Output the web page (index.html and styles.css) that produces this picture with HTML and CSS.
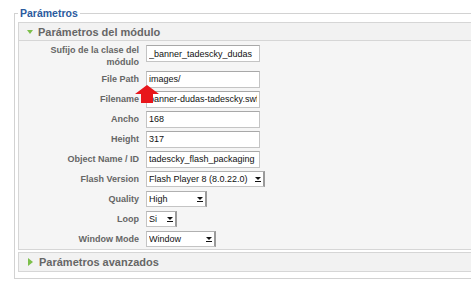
FILE: index.html
```html
<!DOCTYPE html>
<html lang="es">
<head>
  <meta charset="UTF-8" />
  <title>Parámetros</title>
  <link rel="stylesheet" href="styles.css">
</head>
<body>

  <fieldset class="params">
    <legend>Parámetros</legend>

    <div class="pane">
      <div class="pane-title open"><span class="toggle"></span>Parámetros del módulo</div>
      <div class="pane-body">
        <div class="row first">
          <label for="suffix">Sufijo de la clase del módulo</label>
          <input type="text" id="suffix" value="_banner_tadescky_dudas">
        </div>
        <div class="row">
          <label for="path">File Path</label>
          <input type="text" id="path" value="images/">
        </div>
        <div class="row">
          <label for="filename">Filename</label>
          <input type="text" id="filename" value="banner-dudas-tadescky.swf">
        </div>
        <div class="row">
          <label for="width">Ancho</label>
          <input type="text" id="width" value="168">
        </div>
        <div class="row">
          <label for="height">Height</label>
          <input type="text" id="height" value="317">
        </div>
        <div class="row">
          <label for="objname">Object Name / ID</label>
          <input type="text" id="objname" value="tadescky_flash_packaging">
        </div>
        <div class="row">
          <label for="version">Flash Version</label>
          <span class="dropdown w-version">
            <select id="version"><option>Flash Player 8 (8.0.22.0)</option></select>
            <span class="caret"></span>
          </span>
        </div>
        <div class="row">
          <label for="quality">Quality</label>
          <span class="dropdown w-quality">
            <select id="quality"><option>High</option></select>
            <span class="caret"></span>
          </span>
        </div>
        <div class="row">
          <label for="loop">Loop</label>
          <span class="dropdown w-loop">
            <select id="loop"><option>Si</option></select>
            <span class="caret"></span>
          </span>
        </div>
        <div class="row">
          <label for="wmode">Window Mode</label>
          <span class="dropdown w-wmode">
            <select id="wmode"><option>Window</option></select>
            <span class="caret"></span>
          </span>
        </div>
      </div>
    </div>

    <div class="pane">
      <div class="pane-title closed"><span class="toggle"></span>Parámetros avanzados</div>
    </div>
  </fieldset>

  <!-- red pointer drawn over the form -->
  <svg class="pointer" width="26" height="20" viewBox="0 0 26 20">
    <path d="M13 0 L25 9 L19 9 L19 18 L7 18 L7 9 L1 9 Z" fill="#e8161b"/>
  </svg>

</body>
</html>
```

FILE: styles.css
```css
* {
  box-sizing: border-box;
}

body {
  margin: 0;
  font-family: 'Liberation Sans', Arial, sans-serif;
  background: #fff;
}

/* the box runs on past the right edge of the window, so no right border */
.params {
  width: calc(100% - 14px);
  margin: 7px 0 0 14px;
  padding: 3px 0 6px 3px;
  border: 1px solid #d2d2d2;
  border-right: none;
  min-inline-size: 0;
}

.params legend {
  padding: 0 2px;
  font-size: 10.5px;
  font-weight: bold;
  color: #2b5b9e;
}

.pane {
  border: 1px solid #d6d6d6;
  border-right: none;
  background: #f5f5f5;
  margin-bottom: 2px;
}

.pane:last-child {
  margin-bottom: 0;
}

.pane-title {
  display: flex;
  align-items: center;
  height: 18px;
  padding-left: 7px;
  font-size: 11px;
  font-weight: bold;
  color: #666;
  background: #f2f2f2;
}

.pane-title.open {
  border-bottom: 1px solid #d6d6d6;
}

.toggle {
  width: 0;
  height: 0;
  margin-right: 5px;
}

.open .toggle {
  border-left: 3.5px solid transparent;
  border-right: 3.5px solid transparent;
  border-top: 4px solid #7cbf4a;
  margin-left: 1px;
}

.closed .toggle {
  border-top: 4px solid transparent;
  border-bottom: 4px solid transparent;
  border-left: 5px solid #7cbf4a;
  margin-left: 2px;
  margin-right: 6px;
}

.pane-body {
  padding-top: 3px;
}

.row {
  display: flex;
  align-items: center;
  gap: 7px;
  height: 20px;
}

.row.first {
  align-items: flex-start;
  height: 25px;
}

.row label {
  width: 120px;
  flex: none;
  text-align: right;
  font-size: 9px;
  font-weight: bold;
  line-height: 12px;
  color: #666;
}

.row.first label {
  padding-left: 28px;
}

.row.first input {
  margin-top: 1px;
}

input {
  width: 114px;
  height: 17px;
  padding: 0 2px;
  font-family: 'Liberation Sans', Arial, sans-serif;
  font-size: 9px;
  color: #111;
  background: #fff;
  border: 1px solid #c4c4c4;
  border-top-color: #a8a8a8;
  border-radius: 0;
}

.dropdown {
  display: inline-flex;
  align-items: stretch;
  height: 16px;
  background: #fff;
  border: 1px solid #c4c4c4;
  border-top-color: #b0b0b0;
  border-right: 2px solid #9a9a9a;
}

.dropdown select {
  appearance: none;
  -webkit-appearance: none;
  flex: 1;
  min-width: 0;
  border: none;
  background: transparent;
  padding: 0 2px;
  font-family: 'Liberation Sans', Arial, sans-serif;
  font-size: 9px;
  color: #111;
}

.caret {
  width: 10px;
  flex: none;
  display: flex;
  align-items: center;
  justify-content: center;
  flex-direction: column;
  gap: 1px;
}

.caret::before {
  content: "";
  border-left: 3px solid transparent;
  border-right: 3px solid transparent;
  border-top: 3px solid #111;
}

.caret::after {
  content: "";
  width: 6px;
  height: 1px;
  background: #111;
}

.w-version { width: 119px; }
.w-quality { width: 61px; }
.w-loop { width: 31px; }
.w-wmode { width: 70px; }

.pointer {
  position: absolute;
  left: 134px;
  top: 85px;
}
```
